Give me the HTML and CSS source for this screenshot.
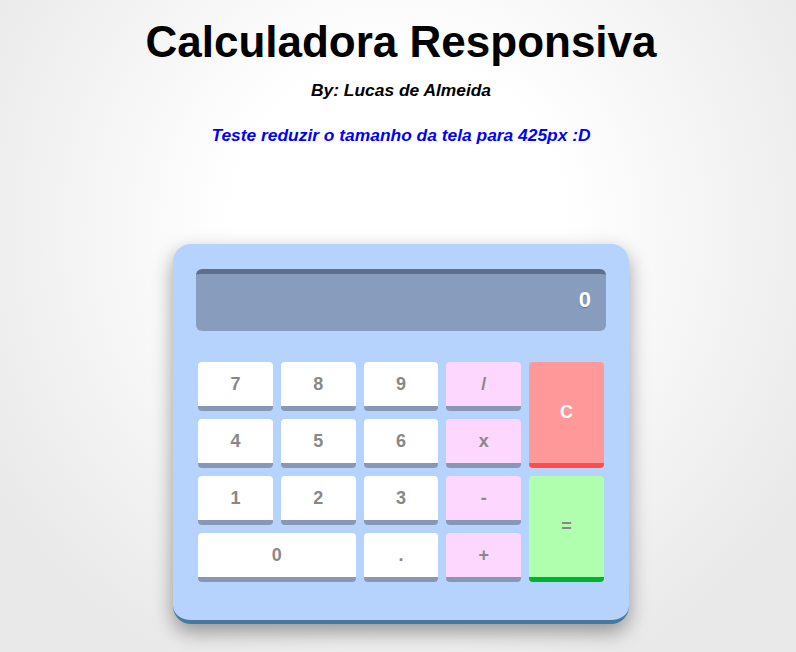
FILE: index.html
```html
<!DOCTYPE html>
<html lang="pt-BR">
<head>
<meta charset="utf-8">
<title>Calculadora Responsiva</title>
<link rel="stylesheet" href="styles.css">
</head>
<body>
<main class="page">
  <header class="header">
    <h1 class="title">Calculadora Responsiva</h1>
    <p class="author">By: Lucas de Almeida</p>
    <p class="hint">Teste reduzir o tamanho da tela para 425px :D</p>
  </header>
  <section class="calc">
    <div class="display">0</div>
    <div class="keys">
      <button class="key">7</button>
      <button class="key">8</button>
      <button class="key">9</button>
      <button class="key op">/</button>
      <button class="key clear">C</button>
      <button class="key">4</button>
      <button class="key">5</button>
      <button class="key">6</button>
      <button class="key op">x</button>
      <button class="key">1</button>
      <button class="key">2</button>
      <button class="key">3</button>
      <button class="key op">-</button>
      <button class="key equals">=</button>
      <button class="key zero">0</button>
      <button class="key">.</button>
      <button class="key op">+</button>
    </div>
  </section>
</main>
</body>
</html>
```
FILE: styles.css
```css
* { box-sizing: border-box; }
html, body { margin: 0; padding: 0; }
body {
  min-height: 100vh;
  font-family: "Liberation Sans", Arial, sans-serif;
  background: radial-gradient(ellipse 60% 75% at 50% 35%, #ffffff 0%, #ffffff 35%, #e9e9e9 100%);
  background-color: #e9e9e9;
}
.page {
  padding: 17px 0 0 6px;
  text-align: center;
}
.title {
  margin: 0;
  font-size: 44px;
  line-height: 50px;
  font-weight: bold;
  color: #000;
}
.author {
  margin: 13px 0 0;
  font-size: 17.4px;
  line-height: 20px;
  font-weight: bold;
  font-style: italic;
  color: #000;
}
.hint {
  margin: 25px 0 0;
  font-size: 17.4px;
  line-height: 20px;
  font-weight: bold;
  font-style: italic;
  color: #0000ff;
}
.calc {
  width: 456px;
  margin: 99px auto 0;
  padding: 25px 23px 38px;
  background: #b5d3fd;
  border-radius: 18px;
  border-bottom: 4px solid #457a9f;
  box-shadow: 0 8px 20px rgba(0, 0, 0, 0.38);
}
.display {
  height: 62px;
  padding: 0 15px;
  background: #889dbd;
  border-top: 5px solid #5f6f8b;
  border-radius: 6px;
  color: #fff;
  font-size: 22px;
  font-weight: bold;
  line-height: 51px;
  text-align: right;
  text-shadow: 0 1px 1px rgba(0, 0, 0, 0.25);
}
.keys {
  margin: 31px 2px 0;
  display: grid;
  grid-template-columns: repeat(5, 1fr);
  grid-auto-rows: 49px;
  gap: 8px;
}
.key {
  font-family: "Liberation Sans", Arial, sans-serif;
  font-size: 18px;
  font-weight: bold;
  color: #8a8886;
  background: #fff;
  border: none;
  border-bottom: 5px solid #8797b5;
  border-radius: 4px;
  padding: 0;
  margin: 0;
}
.op { background: #fdd7fe; }
.clear {
  grid-row: span 2;
  background: #ff9999;
  border-bottom-color: #ff4c4c;
  color: #fff;
}
.equals {
  grid-row: span 2;
  background: #b0ffae;
  border-bottom-color: #00b22f;
}
.zero { grid-column: span 2; }
```
